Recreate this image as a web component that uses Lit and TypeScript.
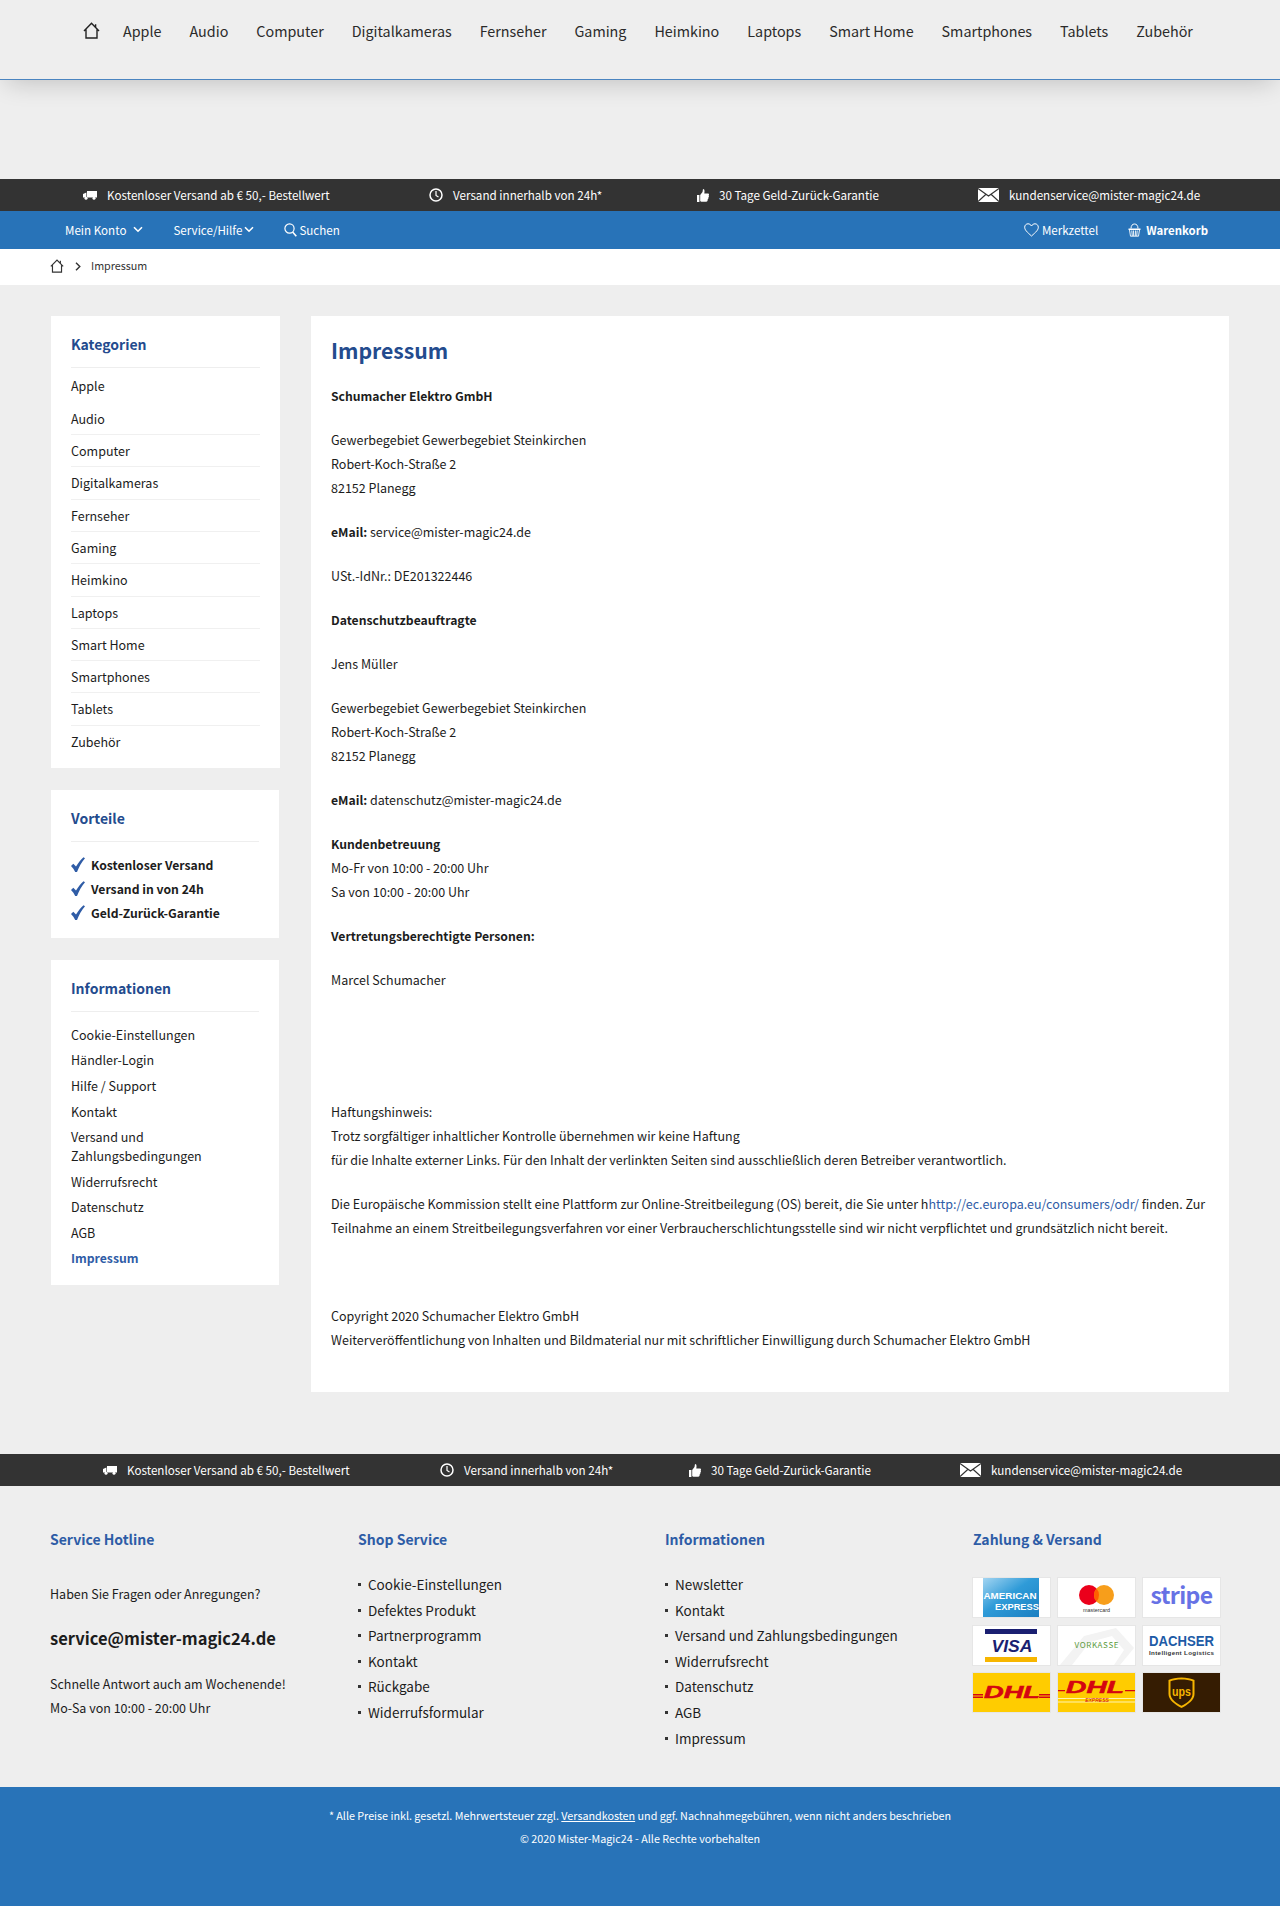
import { LitElement, html, css, svg } from "lit";
import { customElement } from "lit/decorators.js";

const ic = (w: number, h: number, vb: string, body: unknown, cls = "") =>
  html`<svg class="ic ${cls}" width=${w} height=${h} viewBox=${vb}>${body}</svg>`;

const homeIc = (w = 17, h = 17) =>
  ic(w, h, "0 0 17 17", svg`<path d="M1 9 8.500 1.200 16 9M3 7.500V16H14V7.500M12.600 5.600V2.200" fill="none" stroke="currentColor" stroke-width="1.400" stroke-linejoin="miter"/>`);
const chev = (w = 10, h = 7) =>
  ic(w, h, "0 0 10 7", svg`<path d="M1 1.200 5 5.200 9 1.200" fill="none" stroke="currentColor" stroke-width="1.600"/>`);
const crumbChev = () =>
  ic(6, 9, "0 0 6 9", svg`<path d="M1 .8 4.800 4.500 1 8.200" fill="none" stroke="currentColor" stroke-width="1.400"/>`);
const searchIc = () =>
  ic(13, 14, "0 0 13 14", svg`<circle cx="5.500" cy="5.500" r="4.600" fill="none" stroke="currentColor" stroke-width="1.200"/><path d="M8.600 9 12.300 13.300" stroke="currentColor" stroke-width="1.600"/>`);
const heartIc = () =>
  ic(15, 14, "0 0 15 14", svg`<path d="M7.500 13C3 9 .7 7 .7 4.200.7 2.200 2.200.8 4 .8c1.500 0 2.700.8 3.500 2.200C8.300 1.600 9.500.8 11 .8c1.800 0 3.300 1.400 3.300 3.400C14.300 7 12 9 7.500 13Z" fill="none" stroke="currentColor" stroke-width="1"/>`);
const basketIc = () =>
  ic(13, 14, "0 0 13 14", svg`<path d="M3 5.500C3 2.500 4.500 1 6.500 1S10 2.500 10 5.500" fill="none" stroke="currentColor" stroke-width="1"/><path d="M.5 5.500H12.500V7H.5Z" fill="currentColor"/><path d="M1.500 7 2.500 13.200H10.500L11.500 7M3.800 7.500 4.300 13M5.500 7.500 5.700 13M7.500 7.500 7.300 13M9.200 7.500 8.700 13" fill="none" stroke="currentColor" stroke-width=".9"/>`);
const truckIc = () =>
  ic(14, 9, "0 0 14 9", svg`<path d="M4 0H14V6.500H4ZM0 3 3.400 1.500V6.500H0Z" fill="currentColor"/><circle cx="3" cy="7.300" r="1.500" fill="currentColor"/><circle cx="11" cy="7.300" r="1.500" fill="currentColor"/>`);
const clockIc = () =>
  ic(14, 14, "0 0 14 14", svg`<circle cx="7" cy="7" r="6" fill="none" stroke="currentColor" stroke-width="1.500"/><path d="M7 3V7.500L9.500 9" fill="none" stroke="currentColor" stroke-width="1.200"/>`);
const thumbIc = () =>
  ic(12, 13, "0 0 12 13", svg`<path d="M0 6H2.400V13H0ZM3.200 6 5.500 3 6 0C7.500 0 7.800 1.500 7.300 4.500H11.200C12.200 4.500 12.200 6 11.700 6.500 12.200 7.500 11.800 8.300 11.300 8.600 11.600 9.500 11.200 10.300 10.600 10.600 10.800 11.800 10.200 12.800 9.300 12.800H5C4 12.800 3.500 12.300 3.200 12Z" fill="currentColor"/>`);
const mailIc = () =>
  ic(21, 14, "0 0 21 14", svg`<path d="M0 0H21V14H0Z" fill="currentColor"/><path d="M0 .6 10.500 8 21 .6M0 13.600 8 6.300M21 13.600 13 6.300" fill="none" stroke="#333" stroke-width="1.200"/>`);
const checkIc = () =>
  ic(14, 15, "0 0 14 15", svg`<path d="M0 9 2.300 6.800 5 9.600C7.200 5.700 9.600 2.800 12.500 .2L14 1.200C10.800 5 8 9.600 6 15H4.200C3.200 12.800 1.800 10.800 0 9Z" fill="#2f5ca6"/>`);

const usp = (cls: string) => html`<div class="usp ${cls}">
  <span class="u a">${truckIc()}<span>Kostenloser Versand ab € 50,- Bestellwert</span></span>
  <span class="u b">${clockIc()}<span>Versand innerhalb von 24h*</span></span>
  <span class="u c">${thumbIc()}<span>30 Tage Geld-Zurück-Garantie</span></span>
  <span class="u d">${mailIc()}<span>kundenservice@mister-magic24.de</span></span>
</div>`;

const cats = ["Apple","Audio","Computer","Digitalkameras","Fernseher","Gaming","Heimkino","Laptops","Smart Home","Smartphones","Tablets","Zubehör"];

const F = "'Liberation Sans', sans-serif";
const logos = [
  svg`<defs><linearGradient id="amx" x1="0" y1="0" x2="1" y2="1"><stop offset="0" stop-color="#a3d5f2"/><stop offset=".45" stop-color="#2f9bd8"/><stop offset="1" stop-color="#1b7fc1"/></linearGradient></defs>
      <rect x="10" width="56" height="39" fill="url(#amx)"/>
      <text x="10.500" y="20.500" font-family=${F} font-size="9.700" font-weight="700" fill="#fff" textLength="53" lengthAdjust="spacingAndGlyphs">AMERICAN</text>
      <text x="22" y="31.500" font-family=${F} font-size="9.700" font-weight="700" fill="#fff" textLength="44" lengthAdjust="spacingAndGlyphs">EXPRESS</text>`,
  svg`<circle cx="31" cy="17" r="10" fill="#eb001b"/><circle cx="46" cy="17" r="10" fill="#f79e1b"/>
      <path d="M38.500 10.400a10 10 0 0 1 0 13.200a10 10 0 0 1 0-13.200Z" fill="#ff5f00"/>
      <text x="38.500" y="33.500" text-anchor="middle" font-family=${F} font-size="5.400" fill="#333">mastercard</text>`,
  svg`<text x="38.500" y="26" text-anchor="middle" font-family="'Noto Sans CJK SC', sans-serif" font-size="23" font-weight="700" letter-spacing="-.6" fill="#6772e5">stripe</text>`,
  svg`<rect x="12" y="3" width="52" height="5" fill="#1a1f71"/><rect x="12" y="31" width="52" height="5" fill="#f7b600"/>
      <text x="39" y="26" text-anchor="middle" font-family=${F} font-size="16" font-weight="700" font-style="italic" fill="#1a1f71" textLength="41" lengthAdjust="spacingAndGlyphs">VISA</text>`,
  svg`<path d="M2 39 26 10 58 2 76 22 62 39ZM14 39 32 16 54 10 66 24 56 39Z" fill="#f3f3f3" fill-rule="evenodd"/>
      <text x="38.500" y="22" text-anchor="middle" font-family="'Noto Sans CJK SC', sans-serif" font-size="8" fill="#5b9a3c" textLength="44">VORKASSE</text>`,
  svg`<text x="38.500" y="20" text-anchor="middle" font-family=${F} font-size="14" font-weight="700" fill="#1d5ba6" textLength="65" lengthAdjust="spacingAndGlyphs">DACHSER</text>
      <text x="38.500" y="29" text-anchor="middle" font-family=${F} font-size="6.200" font-weight="700" fill="#333" textLength="65">Intelligent Logistics</text>`,
  svg`<rect width="77" height="39" fill="#ffcc00"/><path d="M0 21H10V22.500H0ZM0 23.500H10V25H0ZM66 21H77V22.500H66ZM66 23.500H77V25H66Z" fill="#d40511"/>
      <text x="39" y="25" text-anchor="middle" font-family=${F} font-size="16" font-weight="700" font-style="italic" fill="#d40511" textLength="56" lengthAdjust="spacingAndGlyphs" stroke="#d40511" stroke-width=".5">DHL</text>`,
  svg`<rect width="77" height="39" fill="#ffcc00"/><path d="M0 17H7V18.200H0ZM67 17H77V18.200H67Z" fill="#d40511"/><path d="M0 25H77V26H0ZM0 28.500H77V29.500H0Z" fill="#fff3b0"/>
      <text x="37" y="20" text-anchor="middle" font-family=${F} font-size="16" font-weight="700" font-style="italic" fill="#d40511" textLength="58" lengthAdjust="spacingAndGlyphs" stroke="#d40511" stroke-width=".5">DHL</text>
      <text x="39" y="29" text-anchor="middle" font-family=${F} font-size="5" font-style="italic" fill="#d40511">EXPRESS</text>`,
  svg`<rect width="77" height="39" fill="#351c02"/><path d="M25.500 7C32 3.500 45 3.500 51.500 7V21C51.500 27 45 31.500 38.500 35 32 31.500 25.500 27 25.500 21Z" fill="#f7b500"/><path d="M27.500 8.300C33 5.800 44 5.800 49.500 8.300V21C49.500 26 44 30 38.500 32.700 33 30 27.500 26 27.500 21Z" fill="#351c02"/>
      <text x="38.500" y="23" text-anchor="middle" font-family=${F} font-size="13" font-weight="700" fill="#f7b500" textLength="19" lengthAdjust="spacingAndGlyphs">ups</text>`,
];

@customElement("app-root")
export class AppRoot extends LitElement {
  static styles = css`
    :host { display: block; width: 1280px; height: 1906px; overflow: hidden; background: #eee; color: #1c1c1c;
      font-family: "Noto Sans CJK SC", "Noto Sans", sans-serif; font-size: 12.500px; line-height: 24px; }
    * { box-sizing: border-box; }
    .ic { display: block; flex: none; }
    a { color: inherit; text-decoration: none; }
    .top { height: 80px; background: #eee; border-bottom: 1px solid #4a84c0; box-shadow: 0 8px 26px -6px rgba(0,0,0,.2);
      display: flex; align-items: flex-start; padding: 19px 0 0 83px; gap: 28px; font-size: 14.330px; color: #2a2a2a; white-space: nowrap; }
    .top .ic { margin: 3px -5px 0 0; color: #222; }
    .spacer { height: 99px; }
    .usp { height: 32px; background: #333; color: #fff; display: flex; align-items: center; font-size: 11.650px; position: relative; }
    .u { display: flex; align-items: center; gap: 10px; white-space: nowrap; }
    .top-usp { padding-left: 83px; }
    .top-usp .a { width: 346px; } .top-usp .b { width: 268px; } .top-usp .c { width: 281px; }
    .bot-usp { padding-left: 103px; }
    .bot-usp .a { width: 337px; } .bot-usp .b { width: 249px; } .bot-usp .c { width: 271px; }
    .blue { height: 38px; background: #2873b8; color: #fff; display: flex; align-items: center; padding: 0 72px 1px 65px; font-size: 11.600px; }
    .blue .l { display: flex; align-items: center; }
    .blue .r { margin-left: auto; display: flex; align-items: center; }
    .blue .ch1 { margin: 0 30px 0 7px; }
    .blue .ch2 { margin: 0 30px 0 2px; }
    .blue .g { margin-right: 2px; }
    .blue .mz { margin-left: 3px; }
    .blue .b2 { margin: 0 5px 0 30px; }
    .blue b { font-weight: 700; font-size: 11.400px; }
    .crumb { height: 36px; background: #fff; display: flex; align-items: center; padding: 0 0 2px 50px; font-size: 10.750px; color: #333; }
    .crumb .sep { margin: 0 10px 0 11px; }
    .content { display: grid; grid-template-columns: 229px 918px; column-gap: 31px; padding: 31px 0 0 51px; align-items: start; height: 1169px; }
    .card { background: #fff; padding: 15px 20px 0; }
    .card + .card { margin-top: 22px; margin-right: 1px; }
    .card h3 { margin: 0; padding: 1px 0 11px; font-size: 14px; line-height: 24px; font-weight: 700; color: #234b8e; border-bottom: 1px solid #eee; }
    .cats { list-style: none; margin: 1.500px 0 0; padding: 0 0 10.500px; }
    .cats li { height: 32.300px; line-height: 32px; border-top: 1px solid #f0f0f0; }
    .cats li:first-child { border-top: 0; }
    .cats li:nth-child(2) { border-top-color: transparent; }
    .pros { list-style: none; margin: 0; padding: 11px 0 13px; font-weight: 700; font-size: 12.200px; }
    .pros li { display: flex; align-items: center; gap: 6px; height: 24px; }
    .info { list-style: none; margin: 0; padding: 10px 0 14px; }
    .info li { padding: 3.300px 0; line-height: 19px; }
    .info .act { color: #2f5ca6; font-weight: 700; font-size: 12.200px; }
    .main { background: #fff; height: 1076px; padding: 14px 10px 0 20px; }
    .main h1 { margin: 0 0 14px; font-size: 21.200px; line-height: 40px; font-weight: 700; color: #234b8e; }
    .main p { margin: 0 0 20px; min-height: 24px; }
    .main p a { color: #2f5ca6; }
    .main b { font-weight: 700; font-size: 12.200px; }
    .foot { display: grid; grid-template-columns: 308px 307px 308px auto; padding: 41px 0 0 50px; height: 301px; }
    .foot h4 { margin: 0 0 31px; font-size: 14px; line-height: 24px; font-weight: 700; color: #2d5ca6; }
    .foot p { margin: 0; }
    .foot .mail { font-size: 16.500px; font-weight: 700; line-height: 30px; margin: 17px 0 19px; }
    .foot ul { list-style: none; margin: -10px 0 0; padding: 0; font-size: 13.500px; }
    .foot li { height: 25.600px; line-height: 25.600px; padding-left: 10px; position: relative; }
    .foot li::before { content: ""; position: absolute; left: 0; top: 11px; width: 3px; height: 3px; background: #333; }
    .logos { display: grid; grid-template-columns: repeat(3, 77px); gap: 8.500px 8px; margin-top: -4px; }
    .logo { width: 77px; height: 39px; background: #fff; box-shadow: 0 0 0 1px #e6e6e6; display: block; }
    .bottom { height: 119px; background: #2873b8; color: #fff; text-align: center; font-size: 10.750px; padding-top: 18px; }
    .bottom div { line-height: 22.500px; }
    .bottom u { text-decoration: underline; }
  `;

  render() {
    const footServ = ["Cookie-Einstellungen","Defektes Produkt","Partnerprogramm","Kontakt","Rückgabe","Widerrufsformular"];
    const footInfo = ["Newsletter","Kontakt","Versand und Zahlungsbedingungen","Widerrufsrecht","Datenschutz","AGB","Impressum"];
    return html`
      <div class="top">${homeIc()}${cats.map((c) => html`<a>${c}</a>`)}</div>
      <div class="spacer"></div>
      ${usp("top-usp")}
      <div class="blue">
        <div class="l"><span>Mein Konto</span><span class="ch1">${chev()}</span><span>Service/Hilfe</span><span class="ch2">${chev()}</span><span class="g">${searchIc()}</span><span>Suchen</span></div>
        <div class="r">${heartIc()}<span class="mz">Merkzettel</span><span class="b2">${basketIc()}</span><b>Warenkorb</b></div>
      </div>
      <div class="crumb">${homeIc(14, 14)}<span class="sep">${crumbChev()}</span><span>Impressum</span></div>
      <div class="content">
        <div>
          <div class="card"><h3>Kategorien</h3><ul class="cats">${cats.map((c) => html`<li>${c}</li>`)}</ul></div>
          <div class="card"><h3>Vorteile</h3><ul class="pros">
            <li>${checkIc()}Kostenloser Versand</li><li>${checkIc()}Versand in von 24h</li><li>${checkIc()}Geld-Zurück-Garantie</li></ul></div>
          <div class="card"><h3>Informationen</h3><ul class="info">
            <li>Cookie-Einstellungen</li><li>Händler-Login</li><li>Hilfe / Support</li><li>Kontakt</li><li>Versand und<br>Zahlungsbedingungen</li><li>Widerrufsrecht</li><li>Datenschutz</li><li>AGB</li><li class="act">Impressum</li></ul></div>
        </div>
        <div class="main">
          <h1>Impressum</h1>
          <p><b>Schumacher Elektro GmbH</b></p>
          <p>Gewerbegebiet Gewerbegebiet Steinkirchen<br>Robert-Koch-Straße 2<br>82152 Planegg</p>
          <p><b>eMail:</b> service@mister-magic24.de</p>
          <p>USt.-IdNr.: DE201322446</p>
          <p><b>Datenschutzbeauftragte</b></p>
          <p>Jens Müller</p>
          <p>Gewerbegebiet Gewerbegebiet Steinkirchen<br>Robert-Koch-Straße 2<br>82152 Planegg</p>
          <p><b>eMail:</b> datenschutz@mister-magic24.de</p>
          <p><b>Kundenbetreuung</b><br>Mo-Fr von 10:00 - 20:00 Uhr<br>Sa von 10:00 - 20:00 Uhr</p>
          <p><b>Vertretungsberechtigte Personen:</b></p>
          <p>Marcel Schumacher</p>
          <p></p><p></p>
          <p>Haftungshinweis:<br>Trotz sorgfältiger inhaltlicher Kontrolle übernehmen wir keine Haftung<br>für die Inhalte externer Links. Für den Inhalt der verlinkten Seiten sind ausschließlich deren Betreiber verantwortlich.</p>
          <p>Die Europäische Kommission stellt eine Plattform zur Online-Streitbeilegung (OS) bereit, die Sie unter h<a>http://ec.europa.eu/consumers/odr/</a> finden. Zur<br>Teilnahme an einem Streitbeilegungsverfahren vor einer Verbraucherschlichtungsstelle sind wir nicht verpflichtet und grundsätzlich nicht bereit.</p>
          <p></p>
          <p>Copyright 2020 Schumacher Elektro GmbH<br>Weiterveröffentlichung von Inhalten und Bildmaterial nur mit schriftlicher Einwilligung durch Schumacher Elektro GmbH</p>
        </div>
      </div>
      ${usp("bot-usp")}
      <div class="foot">
        <div><h4>Service Hotline</h4><p>Haben Sie Fragen oder Anregungen?</p><p class="mail">service@mister-magic24.de</p><p>Schnelle Antwort auch am Wochenende!</p><p>Mo-Sa von 10:00 - 20:00 Uhr</p></div>
        <div><h4>Shop Service</h4><ul>${footServ.map((t) => html`<li>${t}</li>`)}</ul></div>
        <div><h4>Informationen</h4><ul>${footInfo.map((t) => html`<li>${t}</li>`)}</ul></div>
        <div><h4>Zahlung &amp; Versand</h4><div class="logos">${logos.map((l) => html`<svg class="logo" viewBox="0 0 77 39">${l}</svg>`)}</div></div>
      </div>
      <div class="bottom"><div>* Alle Preise inkl. gesetzl. Mehrwertsteuer zzgl. <u>Versandkosten</u> und ggf. Nachnahmegebühren, wenn nicht anders beschrieben</div><div>© 2020 Mister-Magic24 - Alle Rechte vorbehalten</div></div>
    `;
  }
}
